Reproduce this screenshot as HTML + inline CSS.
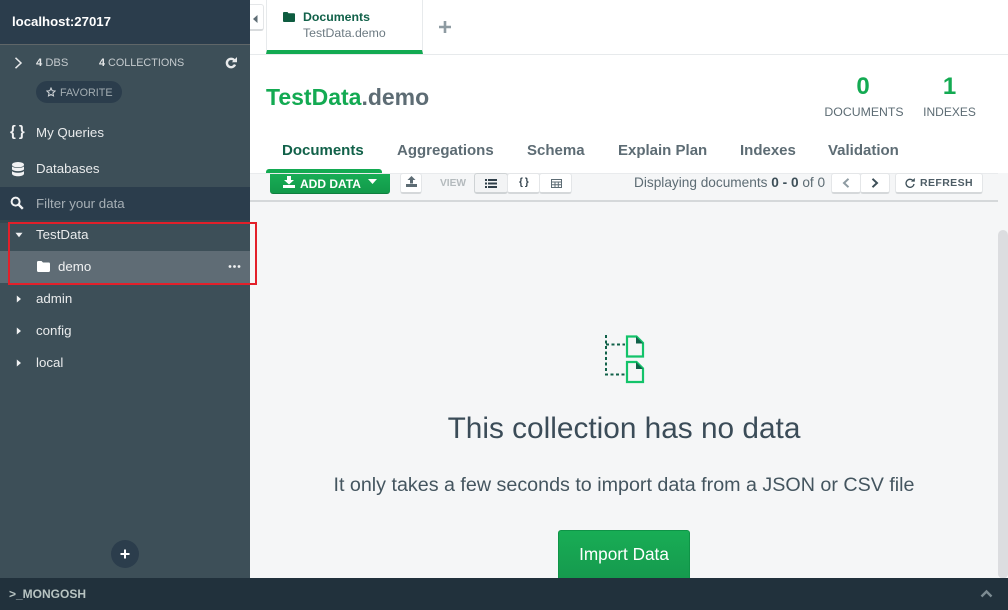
<!DOCTYPE html>
<html><head><meta charset="utf-8"><style>
html,body{margin:0;padding:0;width:1008px;height:610px;overflow:hidden;background:#f5f6f7;font-family:"Liberation Sans",sans-serif}
.a{position:absolute;white-space:nowrap}
svg{position:absolute;display:block}
.nav{font-size:15px;font-weight:700;color:#5d6c74;top:142px;line-height:18px}
.btn{position:absolute;background:#fff;border:1px solid #e4e6e8;border-bottom:2px solid #d5d8da;box-sizing:border-box;border-radius:3px}
.s{color:#fff;font-size:14px;line-height:16px}
</style></head><body>
<!-- main backgrounds -->
<div class="a" style="left:250px;top:0;width:758px;height:173px;background:#fff"></div>
<div class="a" style="left:250px;top:54px;width:758px;height:1px;background:#e7eaec"></div>
<div class="a" style="left:250px;top:173px;width:748px;height:1px;background:#e9ebed"></div>
<div class="a" style="left:250px;top:200px;width:748px;height:2px;background:#d5d8da"></div>
<div class="a" style="left:998px;top:230px;width:10px;height:348px;background:#dcdde0;border-radius:5px 5px 4px 4px"></div>

<!-- sidebar -->
<div class="a" style="left:0;top:0;width:250px;height:578px;background:#3d4f58"></div>
<div class="a" style="left:0;top:0;width:250px;height:44px;background:#2b3d4c;border-bottom:1px solid #5f6668"></div>
<div class="a" style="left:12px;top:14px;font-size:13.2px;font-weight:700;color:#fff;line-height:16px">localhost:27017</div>
<svg style="left:14px;top:57px" width="10" height="12" viewBox="0 0 10 12"><path d="M1.500 .8L7 6L1.500 11.200" fill="none" stroke="#e8eaeb" stroke-width="1.500"/></svg>
<div class="a" style="left:36px;top:57px;font-size:11.200px;line-height:13px;color:#c5cbce"><b style="color:#e6e8e9">4</b> DBS</div>
<div class="a" style="left:99px;top:57px;font-size:10.800px;line-height:13px;color:#c5cbce"><b style="color:#e6e8e9">4</b> COLLECTIONS</div>
<svg style="left:225px;top:57px" width="12" height="12" viewBox="0 0 12 12"><path d="M9.400 3.400A4.200 4.200 0 1 0 10 7.600" fill="none" stroke="#e8eaeb" stroke-width="2.400"/><path d="M6.800 5.200H12V0Z" fill="#e8eaeb"/></svg>
<div class="a" style="left:36px;top:81px;width:86px;height:22px;border-radius:11px;background:#2b3d4c"></div>
<svg style="left:46px;top:87px" width="10" height="10" viewBox="0 0 10 10"><path d="M5 1L6.200 3.700L9.100 4L6.900 6L7.500 8.900L5 7.400L2.500 8.900L3.100 6L.9 4L3.800 3.700Z" fill="none" stroke="#d5d9dc" stroke-width="1"/></svg>
<div class="a" style="left:60px;top:86px;font-size:10.800px;line-height:14px;color:#a3adb2">FAVORITE</div>
<div class="a s" style="left:10px;top:124px;font-size:15px;font-weight:700;letter-spacing:3px;color:#f1f2f3">{}</div>
<div class="a s" style="left:36px;top:125px;font-size:13.300px;color:#e9ebec">My Queries</div>
<svg style="left:12px;top:162px" width="12" height="15" viewBox="0 0 12 15"><ellipse cx="6" cy="2.700" rx="6" ry="2.700" fill="#f1f2f3"/><path d="M0 4.300c1.200 2.300 10.800 2.300 12 0v3c-1.200 2.500-10.800 2.500-12 0zM0 9c1.200 2.300 10.800 2.300 12 0v3c-1.200 3-10.800 3-12 0z" fill="#f1f2f3"/></svg>
<div class="a s" style="left:36px;top:161px;font-size:13.300px;color:#e9ebec">Databases</div>
<div class="a" style="left:0;top:187px;width:250px;height:33px;background:#2b3d4c"></div>
<svg style="left:10px;top:196px" width="14" height="14" viewBox="0 0 14 14"><circle cx="5.600" cy="5.600" r="4" fill="none" stroke="#f1f2f3" stroke-width="2"/><path d="M8.500 8.500L12.800 12.800" stroke="#f1f2f3" stroke-width="2.400"/></svg>
<div class="a" style="left:36px;top:196px;font-size:13.300px;line-height:16px;color:#a6afb5">Filter your data</div>
<div class="a" style="left:0;top:220px;width:250px;height:3px;background:#35474f"></div>
<div class="a" style="left:0;top:251px;width:250px;height:32px;background:#5f6c75"></div>
<svg style="left:15px;top:232px" width="8" height="6" viewBox="0 0 8 6"><path d="M.5 .8H7.500L4 5.200Z" fill="#f1f2f3"/></svg>
<div class="a s" style="left:36px;top:227px;font-size:13.300px;color:#e9ebec">TestData</div>
<svg style="left:37px;top:261px" width="13" height="11" viewBox="0 0 13 11"><path d="M0 1.200Q0 0 1.200 0H4.500L6 1.500H11.800Q13 1.500 13 2.700V9.800Q13 11 11.800 11H1.200Q0 11 0 9.800Z" fill="#fff"/></svg>
<div class="a s" style="left:58px;top:259px;font-size:13.300px;color:#f1f2f3">demo</div>
<svg style="left:228px;top:264px" width="13" height="5" viewBox="0 0 13 5"><circle cx="2" cy="2.500" r="1.400" fill="#f1f2f3"/><circle cx="6.500" cy="2.500" r="1.400" fill="#f1f2f3"/><circle cx="11" cy="2.500" r="1.400" fill="#f1f2f3"/></svg>
<svg style="left:16px;top:295px" width="6" height="8" viewBox="0 0 6 8"><path d="M.8 .5L5 4L.8 7.500Z" fill="#f1f2f3"/></svg>
<div class="a s" style="left:36px;top:291px;font-size:13.300px;color:#e9ebec">admin</div>
<svg style="left:16px;top:327px" width="6" height="8" viewBox="0 0 6 8"><path d="M.8 .5L5 4L.8 7.500Z" fill="#f1f2f3"/></svg>
<div class="a s" style="left:36px;top:323px;font-size:13.300px;color:#e9ebec">config</div>
<svg style="left:16px;top:359px" width="6" height="8" viewBox="0 0 6 8"><path d="M.8 .5L5 4L.8 7.500Z" fill="#f1f2f3"/></svg>
<div class="a s" style="left:36px;top:355px;font-size:13.300px;color:#e9ebec">local</div>
<div class="a" style="left:111px;top:540px;width:28px;height:28px;border-radius:14px;background:#2b3d4c"></div>
<svg style="left:120px;top:549px" width="10" height="10" viewBox="0 0 10 10"><path d="M5 .5V9.500M.5 5H9.500" stroke="#fff" stroke-width="2"/></svg>
<!-- red box -->
<div class="a" style="left:8px;top:222px;width:249px;height:63px;box-sizing:border-box;border:2px solid #e3202a"></div>

<!-- tab bar -->
<div class="a" style="left:250px;top:4px;width:14px;height:27px;box-sizing:border-box;background:#fff;border:1px solid #e4e6e8;border-left:0;border-bottom:2px solid #d8dbdd;border-radius:0 3px 3px 0"></div>
<svg style="left:253px;top:15px" width="5" height="8" viewBox="0 0 5 8"><path d="M4.500 0V8L0 4Z" fill="#5d6c74"/></svg>
<div class="a" style="left:266px;top:0;width:157px;height:54px;box-sizing:border-box;border-left:1px solid #e7eaec;border-right:1px solid #e7eaec;border-bottom:4px solid #13aa52"></div>
<svg style="left:283px;top:12px" width="12" height="10" viewBox="0 0 12 10"><path d="M0 1Q0 0 1 0H4.500L5.500 1.200H11Q12 1.200 12 2.200V9Q12 10 11 10H1Q0 10 0 9Z" fill="#0e5c40"/></svg>
<div class="a" style="left:303px;top:10px;font-size:12.300px;font-weight:700;line-height:15px;color:#116149">Documents</div>
<div class="a" style="left:303px;top:26px;font-size:12.300px;line-height:15px;color:#6c7a82">TestData.demo</div>
<svg style="left:439px;top:21px" width="12" height="12" viewBox="0 0 12 12"><path d="M6 0V12M0 6H12" stroke="#8e9ba2" stroke-width="2.600"/></svg>

<!-- title -->
<div class="a" style="left:266px;top:83px;font-size:23px;font-weight:700;line-height:28px;color:#13aa52">TestData<span style="color:#5d6c74">.demo</span></div>
<div class="a" style="left:823px;top:73px;width:80px;text-align:center;font-size:24px;font-weight:700;line-height:28px;color:#13aa52">0</div>
<div class="a" style="left:824px;top:105px;width:80px;text-align:center;font-size:12.300px;line-height:15px;color:#5d6c74">DOCUMENTS</div>
<div class="a" style="left:923px;top:73px;width:53px;text-align:center;font-size:24px;font-weight:700;line-height:28px;color:#13aa52">1</div>
<div class="a" style="left:923px;top:105px;width:53px;text-align:center;font-size:12px;line-height:15px;color:#5d6c74">INDEXES</div>

<!-- nav -->
<div class="a nav" style="left:282px;color:#116149">Documents</div>
<div class="a nav" style="left:397px">Aggregations</div>
<div class="a nav" style="left:527px">Schema</div>
<div class="a nav" style="left:618px">Explain Plan</div>
<div class="a nav" style="left:740px">Indexes</div>
<div class="a nav" style="left:828px">Validation</div>
<div class="a" style="left:266px;top:169px;width:116px;height:4px;background:#13aa52;border-radius:3px 3px 0 0"></div>

<!-- toolbar -->
<div class="a" style="left:270px;top:174px;width:120px;height:20px;box-sizing:border-box;background:linear-gradient(#18ad55,#129a4a);border-bottom:1px solid #0f7e3e;border-radius:0 0 3px 3px"></div>
<svg style="left:283px;top:176px" width="12" height="12" viewBox="0 0 12 12"><path d="M4 0H8V4H11L6 8.500L1 4H4ZM0 9H12V12H0Z" fill="#fff"/></svg>
<div class="a" style="left:300px;top:177px;font-size:12px;font-weight:700;line-height:14px;color:#fff">ADD DATA</div>
<svg style="left:368px;top:179px" width="9" height="5" viewBox="0 0 9 5"><path d="M0 0H9L4.500 5Z" fill="#fff"/></svg>
<div class="btn" style="left:400px;top:173px;width:22px;height:21px"></div>
<svg style="left:406px;top:176px" width="11" height="11" viewBox="0 0 11 11"><path d="M5.500 0L9.500 4H7V7.500H4V4H1.500ZM0 8H11V11H0Z" fill="#5d6c74"/></svg>
<div class="a" style="left:440px;top:177px;font-size:10.200px;font-weight:700;line-height:13px;color:#b4babd">VIEW</div>
<div class="btn" style="left:474px;top:173px;width:34px;height:21px;background:#f3f4f5;border-color:#cfd3d5"></div>
<div class="btn" style="left:507px;top:173px;width:33px;height:21px"></div>
<div class="btn" style="left:539px;top:173px;width:33px;height:21px"></div>
<svg style="left:485px;top:179px" width="12" height="9" viewBox="0 0 12 9"><path d="M0 0H2V2H0ZM3 0H12V2H3ZM0 3.500H2V5.500H0ZM3 3.500H12V5.500H3ZM0 7H2V9H0ZM3 7H12V9H3Z" fill="#2f3f49"/></svg>
<div class="a" style="left:519px;top:176px;font-size:10px;font-weight:700;line-height:13px;color:#2f3f49;letter-spacing:2px">{}</div>
<svg style="left:551px;top:179px" width="11" height="9" viewBox="0 0 11 9"><path d="M.5 .5H10.500V8.500H.5ZM.5 3H10.500M.5 5.700H10.500M4 3V8.500M7.300 3V8.500" fill="none" stroke="#5d6c74"/></svg>
<div class="a" style="left:634px;top:175px;font-size:13.650px;line-height:15px;color:#5d6c74">Displaying documents <b style="color:#3d4f58">0 - 0</b> of 0</div>
<div class="btn" style="left:831px;top:173px;width:30px;height:21px"></div>
<div class="btn" style="left:860px;top:173px;width:30px;height:21px"></div>
<div class="btn" style="left:895px;top:173px;width:88px;height:21px"></div>
<svg style="left:842px;top:178px" width="8" height="10" viewBox="0 0 8 10"><path d="M6.500 .8L2 5L6.500 9.200" fill="none" stroke="#8e9ba2" stroke-width="2"/></svg>
<svg style="left:871px;top:178px" width="8" height="10" viewBox="0 0 8 10"><path d="M1.500 .8L6 5L1.500 9.200" fill="none" stroke="#3d4f58" stroke-width="2"/></svg>
<svg style="left:905px;top:178px" width="10" height="10" viewBox="0 0 10 10"><path d="M8 2.600A4 4 0 1 0 9 6" fill="none" stroke="#3d4f58" stroke-width="1.300"/><path d="M6 3.600H9.800V0Z" fill="#3d4f58"/></svg>
<div class="a" style="left:920px;top:177px;font-size:10.500px;font-weight:700;line-height:13px;letter-spacing:.4px;color:#4d5c65">REFRESH</div>

<!-- empty state -->
<svg style="left:600px;top:330px" width="50" height="56" viewBox="0 0 50 56">
<path d="M6 5V44.500H25M6 14.500H25" fill="none" stroke="#116149" stroke-width="2" stroke-dasharray="3 2.500"/>
<path d="M27 6.500H36.500L43 13V26.500H27Z" fill="none" stroke="#13c36a" stroke-width="2.200"/>
<path d="M36 6.500V13.500H43Z" fill="#116149"/>
<path d="M27 32H36.500L43 38.500V52H27Z" fill="none" stroke="#13c36a" stroke-width="2.200"/>
<path d="M36 32V39H43Z" fill="#116149"/>
</svg>
<div class="a" style="left:250px;top:409px;width:748px;text-align:center;font-size:29.800px;line-height:40px;color:#3b4c58">This collection has no data</div>
<div class="a" style="left:250px;top:472px;width:748px;text-align:center;font-size:19.700px;line-height:26px;color:#44555f">It only takes a few seconds to import data from a JSON or CSV file</div>
<div class="a" style="left:558px;top:530px;width:132px;height:48px;box-sizing:border-box;background:linear-gradient(#18ad55,#169a4e);border:1px solid #0f9447;border-bottom:0;border-radius:3px 3px 0 0;color:#fff;font-size:17.200px;text-align:center;line-height:47px">Import Data</div>

<!-- bottom bar -->
<div class="a" style="left:0;top:578px;width:1008px;height:32px;background:#21313c"></div>
<div class="a" style="left:9px;top:587px;font-size:12px;font-weight:700;line-height:14px;color:#b8c4c2">&gt;_MONGOSH</div>
<svg style="left:980px;top:589px" width="13" height="9" viewBox="0 0 13 9"><path d="M1.500 7.500L6.500 2.500L11.500 7.500" fill="none" stroke="#7c8b92" stroke-width="2.400"/></svg>
</body></html>
